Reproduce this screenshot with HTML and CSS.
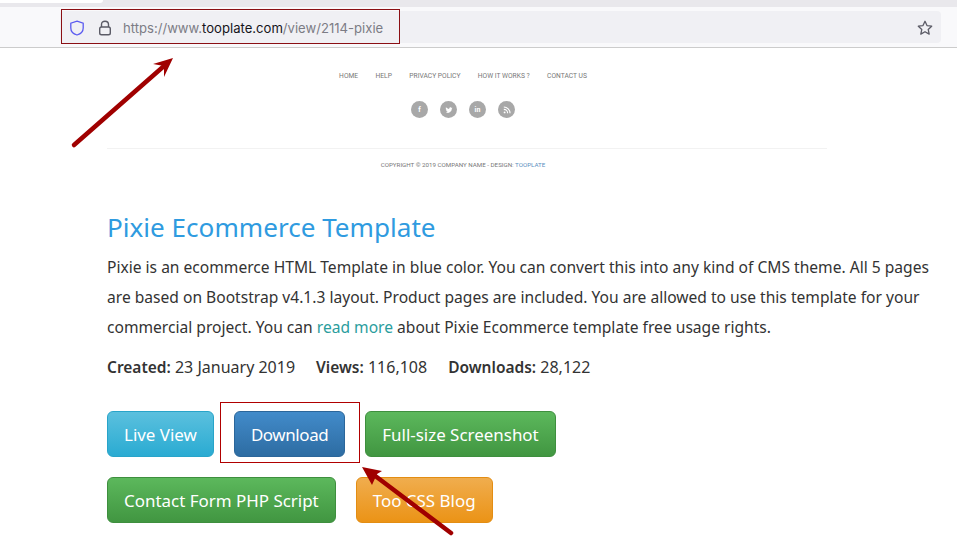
FILE: index.html
```html
<!DOCTYPE html>
<html lang="en">
<head>
    <meta charset="UTF-8">
    <meta name="viewport" content="width=device-width, initial-scale=1.0">
    <title>Pixie Ecommerce Template</title>
    <link rel="stylesheet" href="styles.css">
</head>
<body>
    <!-- Browser chrome -->
    <div class="tabstrip"><div class="tab"></div></div>
    <div class="toolbar">
        <div class="urlbar">
            <svg class="icon" viewBox="0 0 16 16" width="16" height="16"><path d="M8 1.2 14.2 3.2V8C14.2 11.4 11.4 14 8 15 4.6 14 1.8 11.4 1.8 8V3.2Z" fill="none" stroke="#5b5bf0" stroke-width="1.3"/></svg>
            <svg class="icon lock" viewBox="0 0 14 16" width="14" height="16"><path d="M3.5 7V4.5C3.5 2.5 5 1.2 7 1.2S10.500 2.500 10.500 4.500V7" fill="none" stroke="#5b5b66" stroke-width="1.4"/><rect x="1.700" y="7" width="10.600" height="7.800" rx="1.800" fill="none" stroke="#5b5b66" stroke-width="1.400"/></svg>
            <span class="url">https://www.<b>tooplate.com</b>/view/2114-pixie</span>
            <svg class="star" viewBox="0 0 16 16" width="16" height="16"><path d="M8 1.300 10 5.600 14.700 6.200 11.200 9.400 12.200 14.100 8 11.700 3.800 14.100 4.800 9.400 1.300 6.200 6 5.600Z" fill="none" stroke="#5b5b66" stroke-width="1.300" stroke-linejoin="round"/></svg>
        </div>
    </div>

    <!-- Preview of the template footer -->
    <div class="preview">
        <ul class="mini-nav">
            <li>HOME</li>
            <li>HELP</li>
            <li>PRIVACY POLICY</li>
            <li>HOW IT WORKS ?</li>
            <li>CONTACT US</li>
        </ul>
        <div class="mini-social">
            <span class="dot">f</span>
            <span class="dot"><svg viewBox="0 0 10 10" width="8" height="8"><path d="M1 8.500C4.500 9.500 8.500 7.500 8.600 3.200L9.500 2.200 8.400 2.400C7.500 1 5 1.500 5.200 3.700 3.500 3.600 2 2.800 1.200 1.700.7 2.800 1 3.900 1.900 4.600L1 4.400C1.100 5.500 1.800 6 2.700 6.300L1.800 6.400C2.200 7 2.800 7.400 3.500 7.400 2.700 8.100 1.900 8.400 1 8.500Z" fill="#fff"/></svg></span>
            <span class="dot">in</span>
            <span class="dot"><svg viewBox="0 0 10 10" width="8" height="8"><circle cx="2" cy="8" r="1.200" fill="#fff"/><path d="M1 4.200A4.800 4.800 0 0 1 5.800 9M1 1.200A7.800 7.800 0 0 1 8.800 9" fill="none" stroke="#fff" stroke-width="1.400"/></svg></span>
        </div>
        <div class="mini-rule"></div>
        <p class="mini-copy">COPYRIGHT © 2019 COMPANY NAME - DESIGN: <span>TOOPLATE</span></p>
    </div>

    <!-- Template details -->
    <main class="details">
        <h1>Pixie Ecommerce Template</h1>
        <p class="desc">Pixie is an ecommerce HTML Template in blue color. You can convert this into any kind of CMS theme. All 5 pages are based on Bootstrap v4.1.3 layout. Product pages are included. You are allowed to use this template for your commercial project. You can <a href="#">read more</a> about Pixie Ecommerce template free usage rights.</p>
        <p class="meta">
            <span><b>Created:</b> 23 January 2019</span>
            <span><b>Views:</b> 116,108</span>
            <span><b>Downloads:</b> 28,122</span>
        </p>
        <div class="buttons">
            <a class="btn btn-info" href="#">Live View</a>
            <a class="btn btn-primary" href="#">Download</a>
            <a class="btn btn-success" href="#">Full-size Screenshot</a>
        </div>
        <div class="buttons">
            <a class="btn btn-success" href="#">Contact Form PHP Script</a>
            <a class="btn btn-warning" href="#">Too CSS Blog</a>
        </div>
    </main>

    <!-- Annotations drawn over the screenshot -->
    <div class="mark mark-url"></div>
    <div class="mark mark-download"></div>
    <svg class="arrows" viewBox="0 0 957 544" width="957" height="544">
        <g stroke="#a00000" stroke-width="4.500" stroke-linecap="round" fill="#a00000">
            <path d="M74 145 164 66" fill="none"/>
            <path d="M451 533 374 475" fill="none"/>
        </g>
        <path d="M173 58 153 64 164 66 164 77Z" fill="#a00000"/>
        <path d="M362 467 372 485 377 474 382 471Z" fill="#a00000"/>
    </svg>
</body>
</html>
```

FILE: styles.css
```css
* {
    box-sizing: border-box;
}
body {
    margin: 0;
    width: 957px;
    height: 544px;
    overflow: hidden;
    position: relative;
    background-color: #fff;
    font-family: "Noto Sans", sans-serif;
    color: #333;
}

/* browser chrome */
.tabstrip {
    height: 7px;
    background-color: #e9e8ec;
}
.tab {
    width: 103px;
    height: 3px;
    background-color: #fff;
    border-bottom-right-radius: 4px;
}
.toolbar {
    height: 41px;
    padding: 4px 16px 4px 60px;
    background-color: #f9f9fb;
    border-bottom: 1px solid #ccc;
}
.urlbar {
    height: 32px;
    padding: 2px 8px 0 9px;
    display: flex;
    align-items: center;
    background-color: #f0f0f4;
    border-radius: 4px;
}
.lock {
    margin-left: 13px;
}
.url {
    margin-left: 11px;
    font-family: "Inter", sans-serif;
    font-size: 13.100px;
    color: #7c7c85;
}
.url b {
    font-weight: 400;
    color: #15141a;
}
.star {
    margin-left: auto;
}

/* footer of the template preview */
.preview {
    width: 720px;
    margin-left: 107px;
    font-family: "Roboto", sans-serif;
}
.mini-nav {
    list-style: none;
    margin: 0;
    padding: 24px 8px 0 0;
    height: 40px;
    display: flex;
    justify-content: center;
    gap: 17.400px;
    font-size: 6.700px;
    color: #777;
}
.mini-social {
    height: 25px;
    margin-top: 7px;
    padding: 6px 8px 0 0;
    display: flex;
    justify-content: center;
    gap: 12px;
}
.dot {
    width: 17px;
    height: 17px;
    border-radius: 50%;
    background-color: #a8a8a8;
    color: #fff;
    font-size: 7px;
    font-weight: 700;
    display: flex;
    align-items: center;
    justify-content: center;
}
.mini-rule {
    height: 1px;
    margin-top: 28px;
    background-color: #f2f2f2;
}
.mini-copy {
    margin: 12px 0 0;
    padding-right: 8px;
    text-align: center;
    font-size: 6.200px;
    line-height: 8px;
    color: #777;
}
.mini-copy span {
    color: #5a8fc0;
}

/* template details */
.details {
    padding: 0 0 0 107px;
    width: 950px;
}
h1 {
    margin: 40px 0 0;
    font-size: 26.100px;
    font-weight: 400;
    line-height: 36px;
    color: #2f9be0;
}
.desc {
    margin: 7px 0 0;
    font-size: 15.600px;
    line-height: 30px;
}
.desc a {
    color: #2a9d9d;
    text-decoration: none;
}
.meta {
    margin: 10px 0 0;
    font-size: 16px;
    line-height: 30px;
    display: flex;
    gap: 21px;
}
.meta b {
    font-size: 15.500px;
    font-weight: 600;
}
.buttons {
    margin-top: 20px;
    display: flex;
    gap: 20px;
}
.meta + .buttons {
    margin-top: 29px;
}
.btn {
    height: 46px;
    padding: 0 16px;
    display: flex;
    align-items: center;
    border: 1px solid;
    border-radius: 6px;
    color: #fff;
    font-size: 16.950px;
    text-decoration: none;
}
.btn-info {
    background-image: linear-gradient(#5bc0de, #2aabd2);
    border-color: #28a4c9;
}
.btn-primary {
    background-image: linear-gradient(#428bca, #2d6ca2);
    border-color: #2b669a;
    letter-spacing: -0.400px;
}
.btn-success {
    background-image: linear-gradient(#5cb85c, #419641);
    border-color: #3e8f3e;
}
.btn-warning {
    background-image: linear-gradient(#f0ad4e, #eb9316);
    border-color: #e38d13;
}

/* annotations */
.mark {
    position: absolute;
}
.mark-url {
    left: 61px;
    top: 9px;
    width: 339px;
    height: 35px;
    border: 1px solid #8b0f14;
}
.mark-download {
    left: 220px;
    top: 402px;
    width: 140px;
    height: 61px;
    border: 1px solid #b00000;
}
.arrows {
    position: absolute;
    left: 0;
    top: 0;
}
```
